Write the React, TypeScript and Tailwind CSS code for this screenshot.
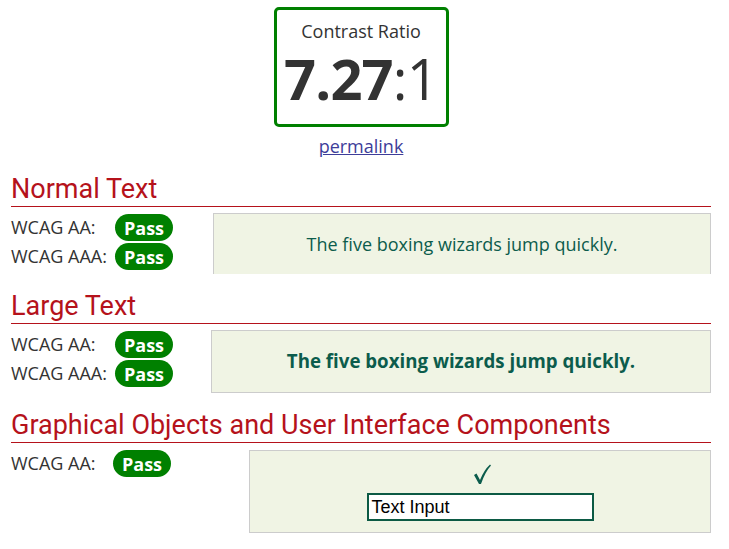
import React from "react";

const Pass = ({ className = "" }: { className?: string }) => (
  <span
    className={`inline-flex items-center justify-center h-[27px] w-[58px] rounded-full bg-[#008000] text-white font-bold text-[18px] leading-none ${className}`}
  >
    Pass
  </span>
);

const Heading = ({ children }: { children: React.ReactNode }) => (
  <h2
    className="text-[#b5121b] text-[27px] leading-[32px] border-b border-[#b5121b] pb-[1px]"
    style={{ fontFamily: "Roboto, sans-serif" }}
  >
    {children}
  </h2>
);

export default function App() {
  return (
    <div
      className="w-[729px] h-[549px] bg-white text-[#333] overflow-hidden"
      style={{ fontFamily: '"Open Sans", sans-serif' }}
    >
      <div className="w-[700px] ml-[11px]">
        <div className="flex flex-col items-center pt-[7px]">
          <div className="w-[175px] h-[120px] border-[3px] border-[#008000] rounded-[5px] flex flex-col items-center">
            <div className="text-[18px] leading-[24px] mt-[9px]">Contrast Ratio</div>
            <div className="text-[56px] leading-[56px] mt-[7px] tracking-[-0.8px]">
              <span className="font-bold">7.27</span>
              <span>:1</span>
            </div>
          </div>
          <a className="text-[18px] leading-[24px] mt-[7px] underline text-[#3d3d99]">permalink</a>
        </div>

        <div className="mt-[15px]">
          <Heading>Normal Text</Heading>
          <div className="flex mt-[6px]">
            <div className="w-[202px] text-[18px]">
              <div className="flex items-center h-[29px]">
                <span className="w-[104px]">WCAG AA:</span>
                <Pass />
              </div>
              <div className="flex items-center h-[29px]">
                <span className="w-[104px]">WCAG AAA:</span>
                <Pass />
              </div>
            </div>
            <div className="w-[498px] h-[61px] bg-[#f0f4e4] border border-b-0 border-[#cccccc] flex items-center justify-center text-[18px] text-[#0c5c4c]">
              The five boxing wizards jump quickly.
            </div>
          </div>
        </div>

        <div className="mt-[16px]">
          <Heading>Large Text</Heading>
          <div className="flex mt-[6px]">
            <div className="w-[200px] text-[18px]">
              <div className="flex items-center h-[29px]">
                <span className="w-[104px]">WCAG AA:</span>
                <Pass />
              </div>
              <div className="flex items-center h-[29px]">
                <span className="w-[104px]">WCAG AAA:</span>
                <Pass />
              </div>
            </div>
            <div className="w-[500px] h-[63px] bg-[#f0f4e4] border border-[#cccccc] flex items-center justify-center text-[18.7px] font-bold text-[#0c5c4c]">
              The five boxing wizards jump quickly.
            </div>
          </div>
        </div>

        <div className="mt-[16px]">
          <Heading>Graphical Objects and User Interface Components</Heading>
          <div className="flex mt-[7px]">
            <div className="w-[238px] text-[18px]">
              <div className="flex items-center h-[27px]">
                <span className="w-[102px]">WCAG AA:</span>
                <Pass />
              </div>
            </div>
            <div className="w-[462px] h-[83px] bg-[#f0f4e4] border border-[#cccccc] flex flex-col items-center">
              <svg className="mt-[12px] ml-[4px]" width="20" height="22" viewBox="0 0 20 22">
                <path
                  d="M2 12 L4.5 10.5 L8 17 Q12 7 18 1.5 L19 2.5 Q13 9 9 21 L7 21 Z"
                  fill="#0c5c4c"
                />
              </svg>
              <div
                className="mt-[8px] w-[227px] h-[28px] bg-white border-2 border-[#0c5a44] text-black text-[18px] leading-[24px] px-[3px]"
                style={{ fontFamily: '"Liberation Sans", Arial, sans-serif' }}
              >
                Text Input
              </div>
            </div>
          </div>
        </div>
      </div>
    </div>
  );
}
